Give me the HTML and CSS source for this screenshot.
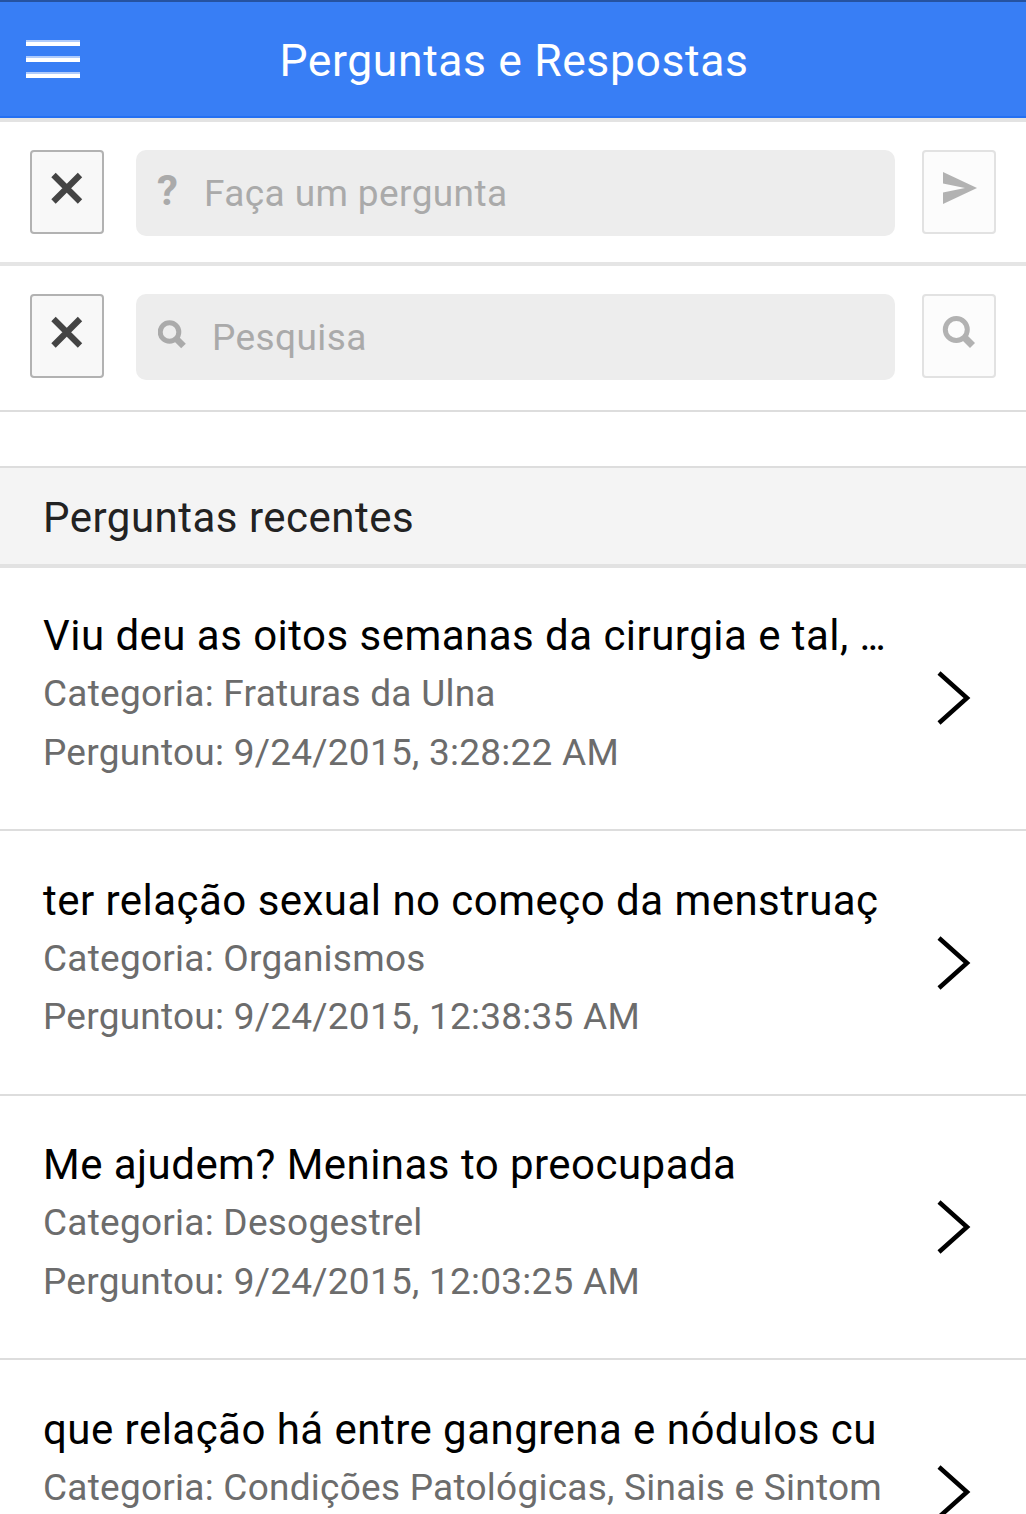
FILE: index.html
```html
<!DOCTYPE html>
<html lang="pt-BR">
<head>
    <meta charset="UTF-8">
    <meta name="viewport" content="width=device-width, initial-scale=1.0">
    <title>Perguntas e Respostas</title>
    <link rel="stylesheet" href="styles.css">
</head>
<body>
    <header class="bar">
        <button class="menu" aria-label="Menu"><span></span><span></span><span></span></button>
        <h1>Perguntas e Respostas</h1>
    </header>

    <form class="row row-ask">
        <button type="button" class="btn" aria-label="Limpar">
            <svg width="34" height="34" viewBox="0 0 34 34"><path d="M3.5 4L30 30.5M30 4L3.5 30.5" stroke="#444" stroke-width="6.2"/></svg>
        </button>
        <label class="field">
            <span class="question">?</span>
            <input type="text" placeholder="Faça um pergunta">
        </label>
        <button type="button" class="btn disabled" aria-label="Enviar">
            <svg width="36" height="34" viewBox="0 0 36 34"><path d="M2 1L36 17L2 33V21.5L24 17L2 12.5Z" fill="#b2b2b2"/></svg>
        </button>
    </form>

    <form class="row row-search">
        <button type="button" class="btn" aria-label="Limpar">
            <svg width="34" height="34" viewBox="0 0 34 34"><path d="M3.5 4L30 30.5M30 4L3.5 30.5" stroke="#444" stroke-width="6.2"/></svg>
        </button>
        <label class="field">
            <svg class="lens" width="30" height="30" viewBox="0 0 30 30" fill="none" stroke="#aaa"><circle cx="11.5" cy="13" r="9.3" stroke-width="5"/><path d="M18 19.5L25.5 27" stroke-width="6.5"/></svg>
            <input type="text" placeholder="Pesquisa">
        </label>
        <button type="button" class="btn disabled" aria-label="Pesquisar">
            <svg width="34" height="34" viewBox="0 0 34 34" fill="none" stroke="#b2b2b2"><circle cx="14.3" cy="14.5" r="11" stroke-width="5"/><path d="M22 22L30.5 30.5" stroke-width="7"/></svg>
        </button>
    </form>

    <h2 class="divider">Perguntas recentes</h2>

    <ul class="list">
        <li class="item">
            <div class="text">
                <h3>Viu deu as oitos semanas da cirurgia e tal, <span class="dots">...</span></h3>
                <p>Categoria: Fraturas da Ulna</p>
                <p>Perguntou: 9/24/2015, 3:28:22 AM</p>
            </div>
            <svg class="chevron" width="34" height="54" viewBox="0 0 34 54"><path d="M2 2L30 27L2 52"/></svg>
        </li>
        <li class="item">
            <div class="text">
                <h3>ter relação sexual no começo da menstruaç</h3>
                <p>Categoria: Organismos</p>
                <p>Perguntou: 9/24/2015, 12:38:35 AM</p>
            </div>
            <svg class="chevron" width="34" height="54" viewBox="0 0 34 54"><path d="M2 2L30 27L2 52"/></svg>
        </li>
        <li class="item">
            <div class="text">
                <h3>Me ajudem? Meninas to preocupada</h3>
                <p>Categoria: Desogestrel</p>
                <p>Perguntou: 9/24/2015, 12:03:25 AM</p>
            </div>
            <svg class="chevron" width="34" height="54" viewBox="0 0 34 54"><path d="M2 2L30 27L2 52"/></svg>
        </li>
        <li class="item">
            <div class="text">
                <h3>que relação há entre gangrena e nódulos cu</h3>
                <p>Categoria: Condições Patológicas, Sinais e Sintom</p>
            </div>
            <svg class="chevron" width="34" height="54" viewBox="0 0 34 54"><path d="M2 2L30 27L2 52"/></svg>
        </li>
    </ul>
</body>
</html>
```

FILE: styles.css
```css
* {
    box-sizing: border-box;
}

body {
    margin: 0;
    background-color: #fff;
    font-family: Roboto, sans-serif;
    color: #000;
}

h1, h2, h3, p, ul {
    margin: 0;
    padding: 0;
    font-weight: 400;
}

button {
    padding: 0;
    border: none;
    background: none;
}

.bar {
    display: grid;
    grid-template-columns: 106px 1fr 106px;
    align-items: center;
    height: 118px;
    border-top: 2px solid #2552a0;
    border-bottom: 2px solid #2470f2;
    background-color: #387ef5;
    color: #fff;
}

.bar h1 {
    padding: 4px 0 0 2px;
    font-size: 44.5px;
    line-height: 60px;
    letter-spacing: 0.6px;
    text-align: center;
}

.menu {
    display: flex;
    flex-direction: column;
    gap: 10px;
    width: 54px;
    margin-left: 26px;
}

.menu span {
    height: 6px;
    background-color: #fff;
    border-top: 2px solid #afcbfb;
}

.row {
    display: flex;
    align-items: flex-start;
    padding: 28px 30px 0;
}

.row-ask {
    height: 148px;
    border-top: 4px solid #e3e3e3;
    border-bottom: 4px solid #e5e5e5;
}

.row-search {
    height: 146px;
    border-bottom: 2px solid #ddd;
}

.btn {
    display: flex;
    justify-content: center;
    width: 74px;
    height: 84px;
    padding-top: 19px;
    border: 2px solid #b2b2b2;
    border-radius: 4px;
    background-color: #f8f8f8;
}

.disabled {
    border-color: #e2e2e2;
    background-color: #fcfcfc;
}

.field {
    display: flex;
    width: 759px;
    height: 86px;
    margin: 0 27px 0 32px;
    border-radius: 10px;
    background-color: #ededed;
}

.question {
    width: 68px;
    padding-left: 21px;
    font-size: 42px;
    font-weight: 700;
    line-height: 81px;
    color: #aaa;
}

.lens {
    margin: 25px 24px 0 22px;
}

.field input {
    flex: 1;
    min-width: 0;
    padding: 0;
    border: none;
    background: none;
    font-family: Roboto, sans-serif;
    font-size: 37px;
    letter-spacing: 0.4px;
    outline: none;
}

.field input::placeholder {
    color: #aaa;
}

.divider {
    height: 102px;
    margin-top: 54px;
    padding-left: 43px;
    border-top: 2px solid #ddd;
    border-bottom: 4px solid #e2e2e2;
    background-color: #f4f4f4;
    color: #222;
    font-size: 42px;
    line-height: 99px;
    letter-spacing: 0.5px;
}

.list {
    list-style: none;
}

.item {
    display: flex;
    justify-content: space-between;
    height: 264.5px;
    padding: 40.6px 55px 0 43px;
    border-bottom: 2px solid #ddd;
}

.item:first-child {
    height: 263px;
    padding-top: 39px;
}

.item:last-child {
    height: 154px;
    border-bottom: none;
    overflow: hidden;
}

.text {
    white-space: nowrap;
}

.item h3 {
    font-size: 42px;
    line-height: 58px;
    letter-spacing: 0.47px;
}

.item .dots {
    letter-spacing: -3.2px;
}

.item p {
    color: #6c6c6c;
    font-size: 37px;
    line-height: 58.5px;
    letter-spacing: 0.25px;
}

.chevron {
    flex: none;
    margin-top: 64px;
    fill: none;
    stroke: #000;
    stroke-width: 4.5;
}
```
